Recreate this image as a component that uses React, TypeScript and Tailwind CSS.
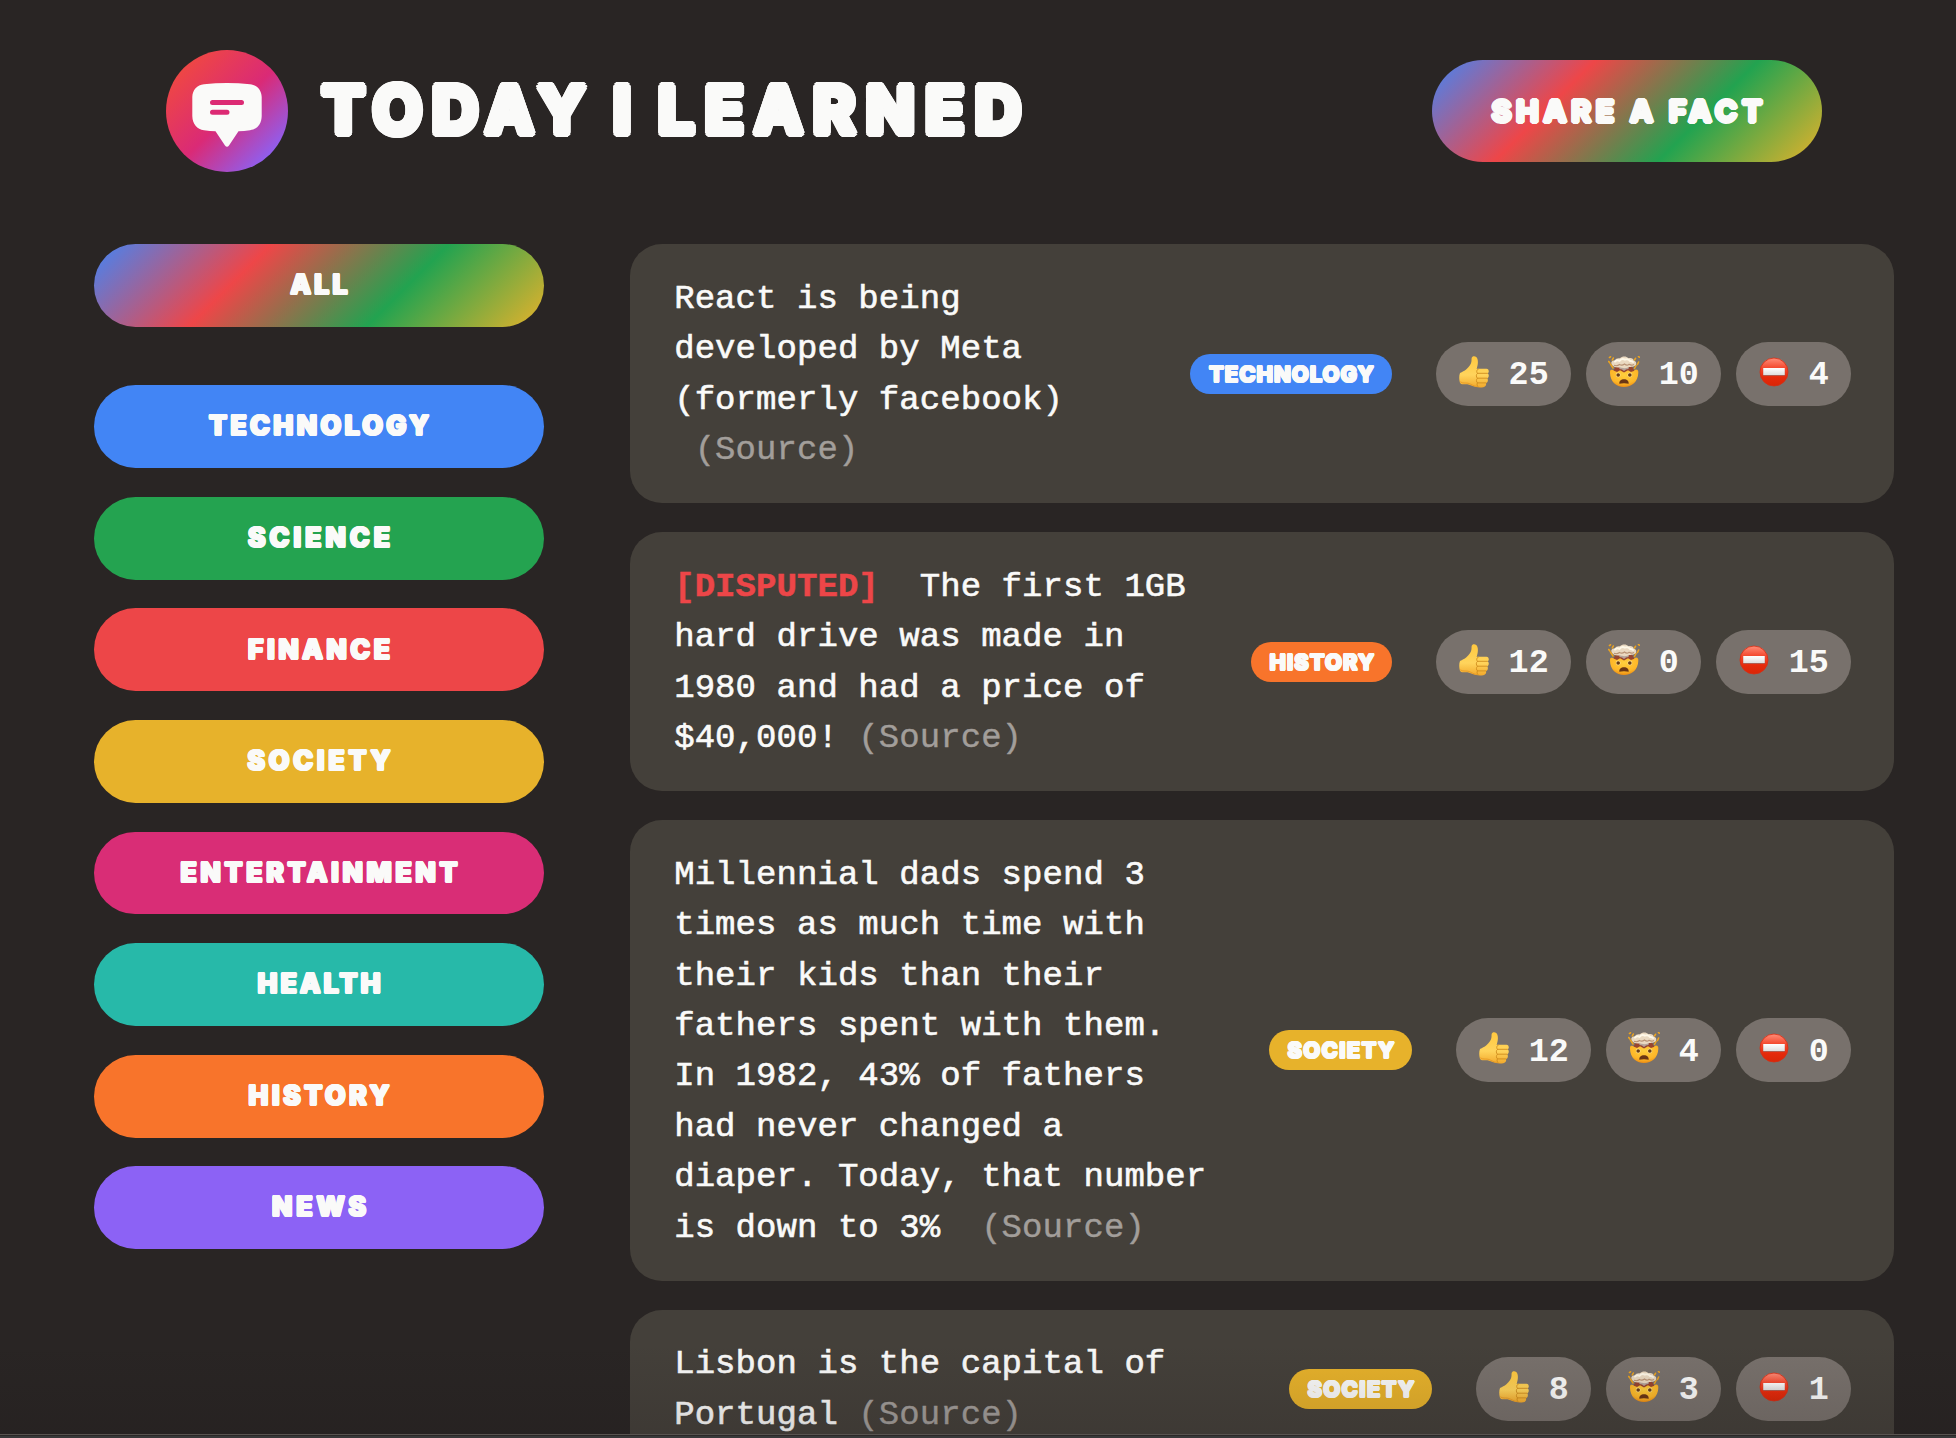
import { useLayoutEffect, useRef, useState, type ReactNode } from "react";

/* Display word set to an exact width by spreading the letters evenly. */
function Word({ text, width, className }: { text: string; width: number; className: string }) {
  const ref = useRef<HTMLSpanElement>(null);
  const [spacing, setSpacing] = useState(0);
  useLayoutEffect(() => {
    const el = ref.current;
    if (!el || text.length < 2) return;
    el.style.letterSpacing = "0px";
    const natural = el.getBoundingClientRect().width;
    const next = (width - natural) / (text.length - 1);
    el.style.letterSpacing = `${next}px`;
    setSpacing(next);
  }, [text, width]);
  return (
    <span
      ref={ref}
      className={`inline-block whitespace-nowrap font-[Inter,sans-serif] text-[#fafaf9] ${className}`}
      style={{ letterSpacing: `${spacing}px`, marginRight: `${-spacing}px` }}
    >
      {text}
    </span>
  );
}

/* Shadow rings that thicken the letters and round their corners. */
const puffLarge =
  "font-bold [text-shadow:4px_0_#fafaf9,3.7px_1.5px_#fafaf9,2.8px_2.8px_#fafaf9,1.5px_3.7px_#fafaf9,0_4px_#fafaf9,-1.5px_3.7px_#fafaf9,-2.8px_2.8px_#fafaf9,-3.7px_1.5px_#fafaf9,-4px_0_#fafaf9,-3.7px_-1.5px_#fafaf9,-2.8px_-2.8px_#fafaf9,-1.5px_-3.7px_#fafaf9,0_-4px_#fafaf9,1.5px_-3.7px_#fafaf9,2.8px_-2.8px_#fafaf9,3.7px_-1.5px_#fafaf9]";
const puffMedium =
  "font-extrabold [text-shadow:1.7px_0_#fafaf9,1.2px_1.2px_#fafaf9,0_1.7px_#fafaf9,-1.2px_1.2px_#fafaf9,-1.7px_0_#fafaf9,-1.2px_-1.2px_#fafaf9,0_-1.7px_#fafaf9,1.2px_-1.2px_#fafaf9]";
const puffSmall =
  "font-extrabold [text-shadow:1.3px_0_#fafaf9,0.9px_0.9px_#fafaf9,0_1.3px_#fafaf9,-0.9px_0.9px_#fafaf9,-1.3px_0_#fafaf9,-0.9px_-0.9px_#fafaf9,0_-1.3px_#fafaf9,0.9px_-0.9px_#fafaf9]";
const puffTiny =
  "font-extrabold [text-shadow:1px_0_#fafaf9,0.7px_0.7px_#fafaf9,0_1px_#fafaf9,-0.7px_0.7px_#fafaf9,-1px_0_#fafaf9,-0.7px_-0.7px_#fafaf9,0_-1px_#fafaf9,0.7px_-0.7px_#fafaf9]";

const rainbow = "bg-[linear-gradient(135deg,#4285f5,#ee4648_33.3%,#22a350_66.6%,#e7b22b)]";

function Logo() {
  return (
    <svg className="size-[122px] shrink-0" viewBox="0 0 122 122">
      <defs>
        <linearGradient id="logo" x1="0" y1="0" x2="1" y2="1">
          <stop offset="0.08" stopColor="#f24b3c" />
          <stop offset="0.52" stopColor="#da2a76" />
          <stop offset="0.88" stopColor="#8b62f6" />
        </linearGradient>
      </defs>
      <circle cx="61" cy="61" r="61" fill="url(#logo)" />
      <path
        d="M38 34.2Q61 31.6 84 34.2C91 34.8 95.6 40 95.7 47V66C95.6 74 91 79.5 84 80.2Q78 81 72.5 81.2L63 95.6Q61 98 59 95.6L49.5 81.2Q44 81 38 80.2C31 79.5 26.5 74 26.3 66V47C26.5 40 31 34.8 38 34.2Z"
        fill="#fafaf9"
      />
      <path d="M46.5 52.4H75.5M46.5 62.2H61" stroke="#dc2a74" strokeWidth="5" strokeLinecap="round" />
    </svg>
  );
}

function ThumbsUp() {
  return (
    <svg className="h-8 w-[30px]" viewBox="0 0 30 32">
      <defs>
        <linearGradient id="thumb" x1="0" y1="0" x2="0" y2="1">
          <stop offset="0" stopColor="#ffc83f" />
          <stop offset="0.6" stopColor="#ffd45c" />
          <stop offset="1" stopColor="#f2a92c" />
        </linearGradient>
      </defs>
      <path
        d="M13.5 0.7C15.5 -0.3 18 0.8 18.6 3.5C19.4 7 18.4 10.4 17.6 12.7H27.5C30.2 12.9 30.4 16.5 28.6 17.3C30.4 18.5 30 21.7 28.2 22.2C29.4 23.5 29 26.4 27 26.9C27.6 29.2 26.5 31 24.3 31.2C20.5 31.7 16.5 31.3 13.5 30C10.5 28.6 9 28.1 6 28.2C3.5 28.6 1.5 28.2 0.8 26.2C0 23.5 0 19.5 1 17C3.2 16 5.5 15 7.4 13.3C10.3 10.8 12.3 8 12.5 5C12.6 3 12.3 1.5 13.5 0.7Z"
        fill="url(#thumb)"
      />
      <path
        d="M18.5 17.3H28.4M18.5 22.2H28M18.5 26.9H27M19.5 12.9C17.7 13.5 17 16 18.6 17.3C16.8 18.5 17 21.3 18.5 22.2C17 23.5 17.2 26 18.5 26.9C17.6 28.2 18 30 19.3 31"
        fill="none"
        stroke="#cf8c1e"
        strokeWidth="0.9"
        strokeLinecap="round"
      />
      <path d="M1.3 25.8C4 27.6 6 26.7 9 27.2C12 28 14 30 18 30.5" fill="none" stroke="#e79a26" strokeWidth="0.9" />
    </svg>
  );
}

function MindBlown() {
  return (
    <svg className="h-8 w-8" viewBox="0 0 32 32">
      <defs>
        <radialGradient id="face" cx="0.5" cy="0.3" r="0.75">
          <stop offset="0" stopColor="#ffcf3d" />
          <stop offset="0.65" stopColor="#fdb628" />
          <stop offset="1" stopColor="#e8820e" />
        </radialGradient>
      </defs>
      <path
        d="M1.5 1.5L2.5 0.8M4.3 4L5.3 2M0.8 5.5L1.8 7M27.5 2.3L26.5 4M30.5 0.6L31.3 1.2M30.6 6L29.5 8.5M28 9.5L26.5 12.5M2.6 8.3L5 12"
        stroke="#eda41f"
        strokeWidth="1.6"
        strokeLinecap="round"
      />
      <path
        d="M2 15.5C2 14 3 13.5 5 14L9 15L13 13.5H20L24 15L28 13.5C30 13.5 30.5 15 30.3 17C30 25.5 24 31 16 31C8 31 2.3 25.5 2 17Z"
        fill="url(#face)"
      />
      <path d="M8 10.5H24L25.5 13.5L26.5 14.7L23 16L20 14.2L16 16.4L12 14.2L9 16L5.5 14.5Z" fill="#98452f" />
      <path d="M11 10H21L20.5 13L18 13.4L16 15L14 13.4L11.5 13Z" fill="#b5a49b" />
      <path
        d="M3.6 8C2.5 5.5 5 4 7 4.5C7.5 2.5 10 1.8 12 2.3C14 0 18.5 0 20.3 2.2C23 1.3 25.7 2.6 25.8 4.7C28.5 5 29 8.3 27.3 9.6C25 11.6 22 10.5 20 11.5C17.5 12.6 14 12.4 12 11.3C9 12 4.5 11 3.6 8Z"
        fill="#ead9c1"
      />
      <path d="M7 5.5Q9 3.4 11.5 4.8Q14 1.8 17 3.6Q20 2.3 22 5Q24 4.6 25 6" fill="none" stroke="#fff8e8" strokeWidth="2" strokeLinecap="round" />
      <path d="M6 9.3Q9 10.5 11.5 8.5Q14 10 16.5 8Q19 10.2 21 8.3Q24 10 26 8.3" fill="none" stroke="#b89274" strokeWidth="1.1" />
      <circle cx="10.2" cy="19" r="2.4" fill="#ffe08a" />
      <circle cx="21.8" cy="19" r="2.4" fill="#ffe08a" />
      <circle cx="10.2" cy="19" r="1.8" fill="#6b3d14" />
      <circle cx="21.8" cy="19" r="1.8" fill="#6b3d14" />
      <path d="M11.3 27.8C11.1 24.9 13 23.2 16 23.2S20.9 24.900 20.7 27.8C18 27 14 27 11.3 27.8Z" fill="#6b3614" />
    </svg>
  );
}

function NoEntry() {
  return (
    <svg className="size-[30px]" viewBox="0 0 30 30">
      <defs>
        <linearGradient id="stop" x1="0" y1="0" x2="0" y2="1">
          <stop offset="0" stopColor="#ff8e79" />
          <stop offset="0.35" stopColor="#f4492f" />
          <stop offset="0.7" stopColor="#e52a0b" />
          <stop offset="1" stopColor="#d92607" />
        </linearGradient>
        <linearGradient id="bar" x1="0" y1="0" x2="0" y2="1">
          <stop offset="0" stopColor="#ffffff" />
          <stop offset="1" stopColor="#dedddd" />
        </linearGradient>
      </defs>
      <circle cx="15" cy="15" r="14" fill="url(#stop)" stroke="#d62d14" strokeWidth="0.8" />
      <rect x="4.2" y="11" width="21.6" height="8" fill="#9d2412" />
      <rect x="4.2" y="11" width="21.6" height="7.3" fill="url(#bar)" />
    </svg>
  );
}

const categories = [
  { name: "TECHNOLOGY", color: "bg-[#4285f5]", width: 220 },
  { name: "SCIENCE", color: "bg-[#24a350]", width: 142 },
  { name: "FINANCE", color: "bg-[#ed4648]", width: 142 },
  { name: "SOCIETY", color: "bg-[#e7b22b]", width: 143 },
  { name: "ENTERTAINMENT", color: "bg-[#d92d76]", width: 277 },
  { name: "HEALTH", color: "bg-[#27b9a9]", width: 123 },
  { name: "HISTORY", color: "bg-[#f8742b]", width: 141 },
  { name: "NEWS", color: "bg-[#8c62f5]", width: 94 },
];

function CategoryButton({ name, color, width }: { name: string; color: string; width: number }) {
  return (
    <button className={`flex h-[82.8px] w-full items-center justify-center rounded-full pb-0.5 ${color}`}>
      <Word text={name} width={width} className={`text-[26.5px] leading-none ${puffSmall}`} />
    </button>
  );
}

function Vote({ icon, count }: { icon: ReactNode; count: number }) {
  return (
    <button className="flex h-16 items-center rounded-full bg-[#78716c] px-[22px] font-['Liberation_Mono',monospace] text-[33.4px] leading-none font-bold text-[#fafaf9]">
      <span className="flex w-8 justify-center pb-1">{icon}</span>
      <span className="ml-[19px] pt-1">{count}</span>
    </button>
  );
}

function Source() {
  return <a className="text-[#a29e9a] [-webkit-text-stroke:0.4px_#a29e9a]">(Source)</a>;
}

type FactProps = {
  children: ReactNode;
  tag: string;
  tagColor: string;
  tagWidth: string;
  wordWidth: number;
  votes: [number, number, number];
};

function Fact({ children, tag, tagColor, tagWidth, wordWidth, votes }: FactProps) {
  return (
    <li className="flex shrink-0 items-center gap-[43.2px] rounded-[32px] bg-[#44403a] py-[28.8px] pr-[43.2px] pl-[44.2px]">
      <p className="relative top-px flex-1 whitespace-pre font-['Liberation_Mono',monospace] text-[34px] leading-[50.4px] tracking-[0.06px] text-[#fafaf9] [-webkit-text-stroke:0.6px_#fafaf9]">
        {children}
      </p>
      <span className={`flex h-10 items-center justify-center rounded-full ${tagColor} ${tagWidth}`}>
        <Word text={tag} width={wordWidth} className={`text-[22px] leading-none ${puffTiny}`} />
      </span>
      <div className="flex gap-[15px]">
        <Vote icon={<ThumbsUp />} count={votes[0]} />
        <Vote icon={<MindBlown />} count={votes[1]} />
        <Vote icon={<NoEntry />} count={votes[2]} />
      </div>
    </li>
  );
}

export default function App() {
  return (
    <div className="relative h-[1438px] w-[1956px] overflow-hidden bg-[#292524]">
      <header className="flex h-[244px] items-start justify-between pt-[50px] pr-[134px] pl-[166px]">
        <div className="flex items-center">
          <Logo />
          <h1 className="flex pb-0.5 pl-[34px] text-[64px] leading-none">
            <Word text="TODAY" width={263} className={puffLarge} />
            <span className="w-[28px]"> </span>
            <Word text="I" width={16} className={puffLarge} />
            <span className="w-[27px]"> </span>
            <Word text="LEARNED" width={363} className={puffLarge} />
          </h1>
        </div>
        <button className={`mt-2.5 flex h-[102px] w-[390px] items-center justify-center rounded-full ${rainbow}`}>
          <Word text="SHARE A FACT" width={271} className={`text-[30.5px] leading-none ${puffMedium}`} />
        </button>
      </header>

      <main className="flex gap-[86px] pr-[62px] pl-[94px]">
        <aside className="w-[450px] shrink-0">
          <div className="mb-[58.4px]">
            <CategoryButton name="ALL" color={rainbow} width={57} />
          </div>
          <div className="flex flex-col gap-[28.8px]">
            {categories.map((c) => (
              <CategoryButton key={c.name} {...c} />
            ))}
          </div>
        </aside>

        <ul className="flex min-w-0 flex-1 flex-col gap-[28.8px]">
          <Fact tag="TECHNOLOGY" tagColor="bg-[#4285f5]" tagWidth="w-[202px]" wordWidth={165} votes={[25, 10, 4]}>
            {"React is being\ndeveloped by Meta\n(formerly facebook)\n "}
            <Source />
          </Fact>
          <Fact tag="HISTORY" tagColor="bg-[#f8742b]" tagWidth="w-[141px]" wordWidth={105} votes={[12, 0, 15]}>
            <span className="font-bold text-[#ed4648] [-webkit-text-stroke:0.5px_#ed4648]">[DISPUTED]</span>
            {"  The first 1GB\nhard drive was made in\n1980 and had a price of\n$40,000! "}
            <Source />
          </Fact>
          <Fact tag="SOCIETY" tagColor="bg-[#e7b22b]" tagWidth="w-[143px]" wordWidth={107} votes={[12, 4, 0]}>
            {
              "Millennial dads spend 3\ntimes as much time with\ntheir kids than their\nfathers spent with them.\nIn 1982, 43% of fathers\nhad never changed a\ndiaper. Today, that number\nis down to 3%  "
            }
            <Source />
          </Fact>
          <Fact tag="SOCIETY" tagColor="bg-[#e7b22b]" tagWidth="w-[143px]" wordWidth={107} votes={[8, 3, 1]}>
            {"Lisbon is the capital of\nPortugal "}
            <Source />
          </Fact>
        </ul>
      </main>

      {/* shade and edge along the bottom of the window */}
      <div className="absolute inset-x-0 bottom-0">
        <div className="h-[90px] bg-linear-to-b from-transparent to-[#1a1315]/15" />
        <div className="h-px bg-[#585350]" />
        <div className="h-px bg-[#2b2827]" />
        <div className="h-0.5 bg-[#38393a]" />
      </div>
    </div>
  );
}
